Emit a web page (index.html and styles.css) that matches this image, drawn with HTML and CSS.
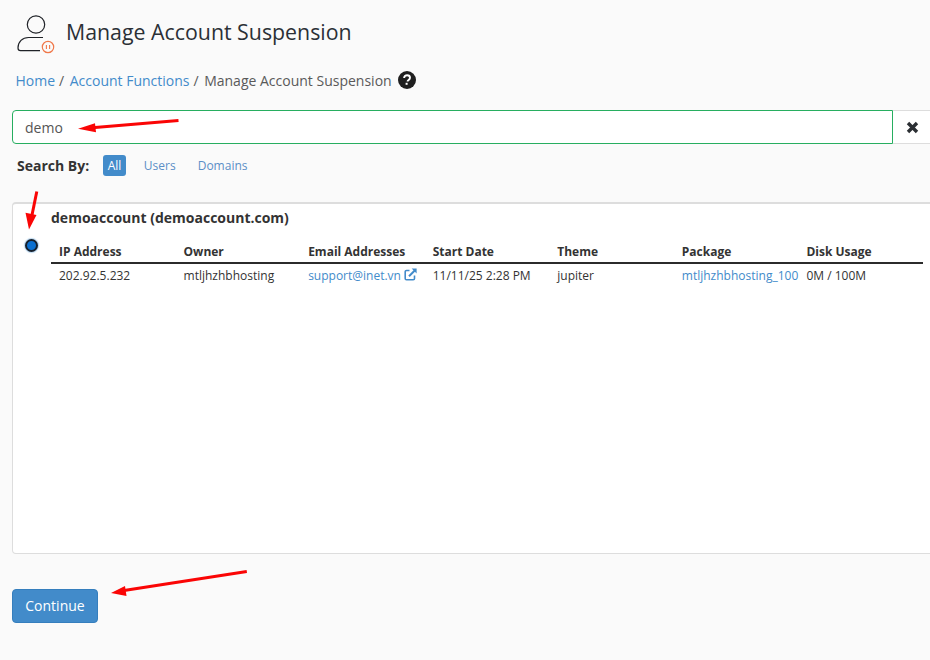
FILE: index.html
```html
<!DOCTYPE html>
<html lang="en">
<head>
<meta charset="utf-8">
<title>Manage Account Suspension</title>
<link rel="stylesheet" href="styles.css">
</head>
<body>
<div class="page">
  <header class="title-row">
    <svg class="page-icon" width="42" height="42" viewBox="0 0 42 42" fill="none">
      <circle cx="21" cy="12.500" r="8.700" stroke="#1f2227" stroke-width="1.200"/>
      <path d="M28 25.500H13.500C7.500 25.500 3 29.500 3 36c0 1.800 1 2.600 2.500 2.600H25" stroke="#1f2227" stroke-width="1.200"/>
      <circle cx="33" cy="35" r="5.700" fill="#fafafa" stroke="#f0784a" stroke-width="1.200"/>
      <path d="M31.400 33v4M34.600 33v4" stroke="#f0784a" stroke-width="1.100"/>
    </svg>
    <h1 class="title">Manage Account Suspension</h1>
  </header>
  <nav class="crumbs">
    <a class="link" href="#">Home</a><span class="sep">/</span>
    <a class="link" href="#">Account Functions</a><span class="sep">/</span>
    <span class="current">Manage Account Suspension</span>
    <svg class="help" width="18" height="18" viewBox="0 0 18 18">
      <circle cx="9" cy="9" r="9" fill="#1f1f1f"/>
      <path d="M6.100 7.100c0-1.800 1.300-2.800 3-2.800s2.900 1 2.900 2.500c0 1.200-.7 1.800-1.500 2.300-.7.4-.9.7-.9 1.400" fill="none" stroke="#fff" stroke-width="1.900"/>
      <rect x="7.600" y="11.800" width="2" height="2" fill="#fff"/>
    </svg>
  </nav>
  <div class="search">
    <input class="search-input" type="text" value="demo">
    <button class="clear" type="button">
      <svg width="13" height="13" viewBox="0 0 13 13"><path d="M2 2l9 9M11 2l-9 9" stroke="#2b2f33" stroke-width="3.400"/></svg>
    </button>
  </div>
  <div class="filters">
    <strong class="filters-label">Search By:</strong>
    <a class="pill pill-active" href="#">All</a>
    <a class="pill" href="#">Users</a>
    <a class="pill" href="#">Domains</a>
  </div>
  <section class="panel">
    <div class="radio-col"><span class="radio"></span></div>
    <div class="account">
      <h2 class="account-name">demoaccount (demoaccount.com)</h2>
      <table class="details">
        <thead>
          <tr><th>IP Address</th><th>Owner</th><th>Email Addresses</th><th>Start Date</th><th>Theme</th><th>Package</th><th>Disk Usage</th></tr>
        </thead>
        <tbody>
          <tr>
            <td>202.92.5.232</td>
            <td>mtljhzhbhosting</td>
            <td><a class="link" href="#">support@inet.vn<svg class="ext" width="13" height="13" viewBox="0 0 13 13" fill="none"><path d="M10.500 7.500v3a1.300 1.300 0 0 1-1.300 1.300H2.500a1.300 1.300 0 0 1-1.300-1.300V3.800a1.300 1.300 0 0 1 1.300-1.300h3" stroke="#428bca" stroke-width="1.600"/><path d="M5 8.200L11 2.200" stroke="#428bca" stroke-width="2"/><path d="M7.600 0.600h5v5z" fill="#428bca"/></svg></a></td>
            <td>11/11/25 2:28 PM</td>
            <td>jupiter</td>
            <td><a class="link" href="#">mtljhzhbhosting_100</a></td>
            <td>0M / 100M</td>
          </tr>
        </tbody>
      </table>
    </div>
  </section>
  <button class="continue" type="button">Continue</button>
</div>
<svg class="arrows" width="930" height="660" viewBox="0 0 930 660" fill="#fa0505" stroke="#fa0505">
  <path d="M178.500 120.500L92 127.700" fill="none" stroke-width="3"/>
  <path d="M78 128.800L95 123.300l1 9z" stroke="none"/>
  <path d="M36.800 191.500L31.800 216" fill="none" stroke-width="3"/>
  <path d="M29 229.500L25.500 212.800l11 2.200z" stroke="none"/>
  <path d="M246.800 571.500L124 590.500" fill="none" stroke-width="3"/>
  <path d="M111 593L125 586l1.500 10z" stroke="none"/>
</svg>
</body>
</html>
```
FILE: styles.css
```css
* { box-sizing: border-box; }
html, body { margin: 0; height: 100%; overflow: hidden; }
body {
  background: #fafafa;
  color: #333;
  font-family: "Open Sans", "Noto Sans", sans-serif;
  font-size: 12px;
  position: relative;
}
.page { width: 960px; padding: 12px 0 0 12px; }
.title-row { display: flex; align-items: center; gap: 9px; padding-left: 4px; height: 42px; }
.page-icon { flex: none; margin-left: -1px; }
.title { margin: 0 0 2px; font-size: 21.330px; font-weight: 400; color: #2b3036; line-height: 36px; }
.crumbs { display: flex; align-items: center; height: 20px; margin-top: 16px; padding-left: 3.500px; font-size: 14px; color: #595959; }
.link { color: #428bca; text-decoration: none; }
.sep { margin: 0 5.500px 0 4px; }
.help { margin-left: 6px; }
.search { display: flex; margin-top: 20px; height: 34px; }
.search-input {
  width: 881px;
  height: 34px;
  border: 1px solid #27ae60;
  border-radius: 4px 0 0 4px;
  background: #fff;
  color: #555;
  font: 14px "Open Sans", sans-serif;
  padding: 0 12px;
  outline: none;
}
.clear {
  width: 50px;
  height: 34px;
  padding: 0 0 0 13px;
  margin: 0;
  text-align: left;
  background: #fff;
  border: 1px solid #ddd;
  border-left: 0;
  display: flex;
  align-items: center;
}
.filters { display: flex; align-items: center; height: 20px; margin-top: 11px; padding-left: 5px; }
.filters-label { font-size: 14px; font-weight: 700; color: #333; margin-right: 14px; }
.pill { color: #5b8fc7; text-decoration: none; font-size: 12px; padding: 2px 10px; line-height: 17px; border-radius: 3px; margin-right: 2px; }
.pill-active { background: #428bca; color: #fff; padding: 2px 4.500px; margin-right: 8px; }
.panel {
  display: flex;
  margin-top: 27px;
  height: 352px;
  width: 960px;
  background: #fff;
  border: 1px solid #ddd;
  border-top-width: 2px;
  border-radius: 4px;
}
.radio-col { width: 38px; flex: none; padding: 35px 0 0 12px; }
.radio { display: block; width: 13px; height: 13px; border-radius: 50%; background: #0a6fd0; border: 2px solid #16202c; box-shadow: 0 0 1px 1px #b9d6ef; }
.account { width: 872px; }
.account-name { margin: 4px 0 0; font-size: 14px; font-weight: 700; line-height: 19px; color: #333; }
.details { width: 872px; margin-top: 16px; border-collapse: collapse; table-layout: fixed; }
.details th { text-align: left; font-size: 12px; font-weight: 700; padding: 0 8px 2px; line-height: 17px; border-bottom: 2px solid #2b2b2b; white-space: nowrap; color: #333; }
.details td { font-size: 12px; padding: 3px 8px; line-height: 17px; white-space: nowrap; color: #333; }
.ext { margin-left: 3px; vertical-align: -1px; }
.continue {
  display: block;
  margin-top: 35px;
  width: 86px;
  height: 34px;
  background: #428bca;
  border: 1px solid #357ebd;
  border-radius: 4px;
  color: #fff;
  font: 14px "Open Sans", sans-serif;
  padding: 0 0 2px;
}
.arrows { position: absolute; left: 0; top: 0; pointer-events: none; }
```
